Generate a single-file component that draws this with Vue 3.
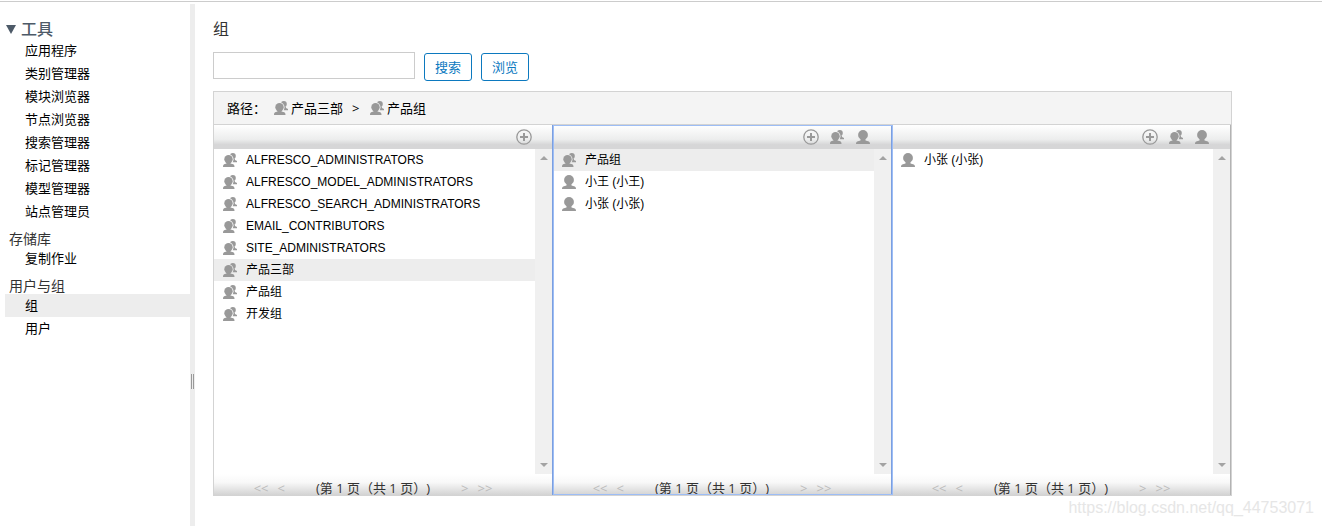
<script setup>
import { ref } from 'vue'

const query = ref('')

const sections = [
  {
    title: '',
    items: ['应用程序', '类别管理器', '模块浏览器', '节点浏览器', '搜索管理器', '标记管理器', '模型管理器', '站点管理员'],
  },
  { title: '存储库', items: ['复制作业'] },
  { title: '用户与组', items: ['组', '用户'] },
]
const current = '组'

const group = (name, selected = false) => ({ name, icon: 'group', selected })
const user = (name) => ({ name, icon: 'user', selected: false })

const columns = [
  {
    actions: ['add'],
    rows: [
      group('ALFRESCO_ADMINISTRATORS'),
      group('ALFRESCO_MODEL_ADMINISTRATORS'),
      group('ALFRESCO_SEARCH_ADMINISTRATORS'),
      group('EMAIL_CONTRIBUTORS'),
      group('SITE_ADMINISTRATORS'),
      group('产品三部', true),
      group('产品组'),
      group('开发组'),
    ],
  },
  {
    active: true,
    actions: ['add', 'group', 'user'],
    rows: [group('产品组', true), user('小王 (小王)'), user('小张 (小张)')],
  },
  { actions: ['add', 'group', 'user'], rows: [user('小张 (小张)')] },
]
const labels = { add: '新建组', group: '添加组', user: '添加用户' }
</script>

<template>
  <svg class="symbols" aria-hidden="true">
    <symbol id="icon-add" viewBox="0 0 16 16">
      <circle cx="8" cy="8" r="7.2" fill="none" stroke="#999" stroke-width="1.3" />
      <path d="M8 4v8M4 8h8" fill="none" stroke="#999" stroke-width="2" />
    </symbol>
    <mask id="behind-front" maskUnits="userSpaceOnUse" x="0" y="0" width="16" height="16">
      <rect width="16" height="16" fill="#fff" />
      <circle cx="6.500" cy="7.300" r="5" fill="#000" />
    </mask>
    <symbol id="icon-group" viewBox="0 0 16 16">
      <g fill="#999" mask="url(#behind-front)">
        <circle cx="10.800" cy="4" r="3" />
        <path d="M11 6.500h1.800l.2 1.500 2 1v1.300h-4.500z" />
      </g>
      <g fill="#999">
        <circle cx="6.500" cy="7.300" r="4.200" />
        <path d="M4.500 10h4v1.500l2.800.7c.8.4 1.200 1.500 1.200 2.800H1c0-1.300.3-2.400 1.100-2.800l2.400-.7z" />
      </g>
    </symbol>
    <symbol id="icon-user" viewBox="0 0 16 16">
      <g fill="#999">
        <circle cx="8" cy="5.900" r="4.900" />
        <path d="M5.500 9.500h5v1.900l3.300 1c.9.4 1.200 1.300 1.200 2.600H1c0-1.300.3-2.200 1.200-2.600l3.300-1z" />
      </g>
    </symbol>
  </svg>

  <div class="page">
    <nav class="sidebar">
      <h2 class="tools"><span class="caret"></span>工具</h2>
      <template v-for="section in sections" :key="section.title">
        <h3 v-if="section.title" class="section">{{ section.title }}</h3>
        <ul>
          <li v-for="item in section.items" :key="item">
            <a href="#" :class="{ current: item === current }">{{ item }}</a>
          </li>
        </ul>
      </template>
    </nav>
    <div class="splitter"><span class="grip"></span></div>

    <main>
      <h1><label for="group-search">组</label></h1>
      <form class="search" @submit.prevent>
        <input id="group-search" v-model="query" type="text" />
        <button type="submit">搜索</button>
        <button type="button">浏览</button>
      </form>

      <div class="browser">
        <div class="path">
          <span class="path-label">路径：</span>
          <a href="#"><svg class="icon"><use href="#icon-group" /></svg>产品三部</a>
          <span class="sep">&gt;</span>
          <a href="#"><svg class="icon"><use href="#icon-group" /></svg>产品组</a>
        </div>
        <div class="columns">
          <section v-for="(column, i) in columns" :key="i" class="column" :class="{ active: column.active }">
            <header>
              <button v-for="action in column.actions" :key="action" type="button" :aria-label="labels[action]">
                <svg class="icon"><use :href="`#icon-${action}`" /></svg>
              </button>
            </header>
            <div class="body">
              <ul>
                <li v-for="row in column.rows" :key="row.name">
                  <a href="#" :class="{ selected: row.selected }">
                    <svg class="icon"><use :href="`#icon-${row.icon}`" /></svg>{{ row.name }}
                  </a>
                </li>
              </ul>
              <div class="scrollbar"><span class="up"></span><span class="down"></span></div>
            </div>
            <footer>
              <span class="step">&lt;&lt;</span>
              <span class="step">&lt;</span>
              <span class="count">(第 1 页（共 1 页）)</span>
              <span class="step">&gt;</span>
              <span class="step">&gt;&gt;</span>
            </footer>
          </section>
        </div>
      </div>
    </main>
    <div class="watermark">https://blog.csdn.net/qq_44753071</div>
  </div>
</template>

<style>
body {
  margin: 0;
  background: #fff;
}
</style>

<style scoped>
.symbols {
  position: absolute;
  width: 0;
  height: 0;
}
.page {
  position: relative;
  box-sizing: border-box;
  display: flex;
  min-height: 100vh;
  padding-top: 4px;
  background: linear-gradient(#ccc, #ccc) 0 1px / 100% 1px no-repeat;
  color: #000;
  font: 13px/20px "Open Sans", "Noto Sans CJK SC", sans-serif;
}
h1,
h2,
h3,
ul {
  margin: 0;
  padding: 0;
  font-weight: 400;
  list-style: none;
}
a {
  color: inherit;
  text-decoration: none;
}
.icon {
  display: block;
  flex: none;
  width: 16px;
  height: 16px;
}
.sidebar {
  flex: none;
  box-sizing: border-box;
  width: 190px;
  padding: 15px 0 0 5px;
}
.tools {
  display: flex;
  align-items: center;
  gap: 5px;
  padding-left: 1px;
  color: #4d5a68;
  font-size: 16px;
  font-weight: 500;
}
.caret {
  border: 5px solid transparent;
  border-top: 9px solid #4d5a68;
  border-bottom: 0;
}
.section {
  padding: 8px 0 0 4px;
  color: #333;
  font-size: 14px;
  line-height: 16px;
}
.sidebar li a {
  display: block;
  padding-left: 20px;
  line-height: 23px;
}
.sidebar .current {
  background: #ededed;
}
.splitter {
  flex: none;
  display: flex;
  align-items: center;
  justify-content: center;
  width: 5px;
  background: #ededed;
}
.grip {
  box-sizing: border-box;
  width: 3px;
  height: 15px;
  margin-top: 232px;
  border: solid #999;
  border-width: 0 1px;
}
main {
  flex: 1;
  min-width: 0;
  padding: 15px 90px 30px 18px;
}
h1 {
  color: #333;
  font-size: 16px;
}
.search {
  display: flex;
  align-items: flex-end;
  gap: 9px;
  min-height: 29px;
  margin: 13px 0 10px;
}
.search input {
  align-self: flex-start;
  box-sizing: border-box;
  width: 202px;
  height: 27px;
  padding: 2px 4px;
  border: 1px solid #ccc;
  font: inherit;
}
.search button {
  box-sizing: border-box;
  height: 28px;
  padding: 0 10px;
  border: 1px solid #0c79bf;
  border-radius: 3px;
  background: #fff;
  color: #0c79bf;
  font: inherit;
}
.browser {
  border: 1px solid #d3d3d3;
}
.path {
  display: flex;
  align-items: center;
  height: 32px;
  padding-left: 13px;
  border-bottom: 1px solid #d3d3d3;
  background: #f4f4f4;
}
.path a {
  display: flex;
  align-items: center;
  gap: 2px;
}
.path-label {
  width: 46px;
}
.sep {
  box-sizing: border-box;
  width: 26px;
  padding-left: 9px;
}
.columns {
  display: grid;
  grid-template-columns: repeat(3, 1fr);
}
.column {
  position: relative;
  min-width: 0;
  border-right: 1px solid #b3b3b3;
}
.column:has(+ .active),
.column.active {
  border-right-color: #7b9fe0;
}
.active::after {
  content: "";
  position: absolute;
  z-index: 1;
  inset: 0 -2px 0 0;
  border: 1px solid #9dbdf5;
  pointer-events: none;
}
.column header {
  display: flex;
  align-items: center;
  justify-content: flex-end;
  gap: 10px;
  height: 24px;
  padding-right: 20px;
  background: linear-gradient(#fff, #eceded 60%, #d6d6d7 82%, #d6d6d7);
}
.column header button {
  padding: 0;
  border: 0;
  background: none;
}
.body {
  display: flex;
  height: 325px;
}
.body ul {
  flex: 1;
  min-width: 0;
}
.body li a {
  display: flex;
  align-items: center;
  gap: 8px;
  height: 22px;
  padding-left: 8px;
  font: 12px/22px "Liberation Sans", "Noto Sans CJK SC", sans-serif;
}
.body .selected {
  background: #ededed;
}
.scrollbar {
  display: flex;
  flex-direction: column;
  align-items: center;
  justify-content: space-between;
  box-sizing: border-box;
  width: 17px;
  padding: 7px 0;
  background: #f0f0f0;
}
.up,
.down {
  border: 4px solid transparent;
}
.up {
  border-top: 0;
  border-bottom-color: #a3a3a3;
}
.down {
  border-bottom: 0;
  border-top-color: #a3a3a3;
}
.column footer {
  display: flex;
  justify-content: center;
  gap: 9px;
  box-sizing: border-box;
  height: 21px;
  padding: 4px 20px 0 0;
  background: linear-gradient(#fff, #f8f8f8 40%, #d3d3d3);
  line-height: 20px;
  white-space: nowrap;
}
.step {
  color: #bbb;
}
.count {
  margin: 0 22px;
  color: #333;
  text-spacing-trim: space-all;
}
.watermark {
  position: absolute;
  right: 8px;
  bottom: 8px;
  color: #e6e6e6;
  font: 16px/20px "Liberation Sans", sans-serif;
}
</style>
